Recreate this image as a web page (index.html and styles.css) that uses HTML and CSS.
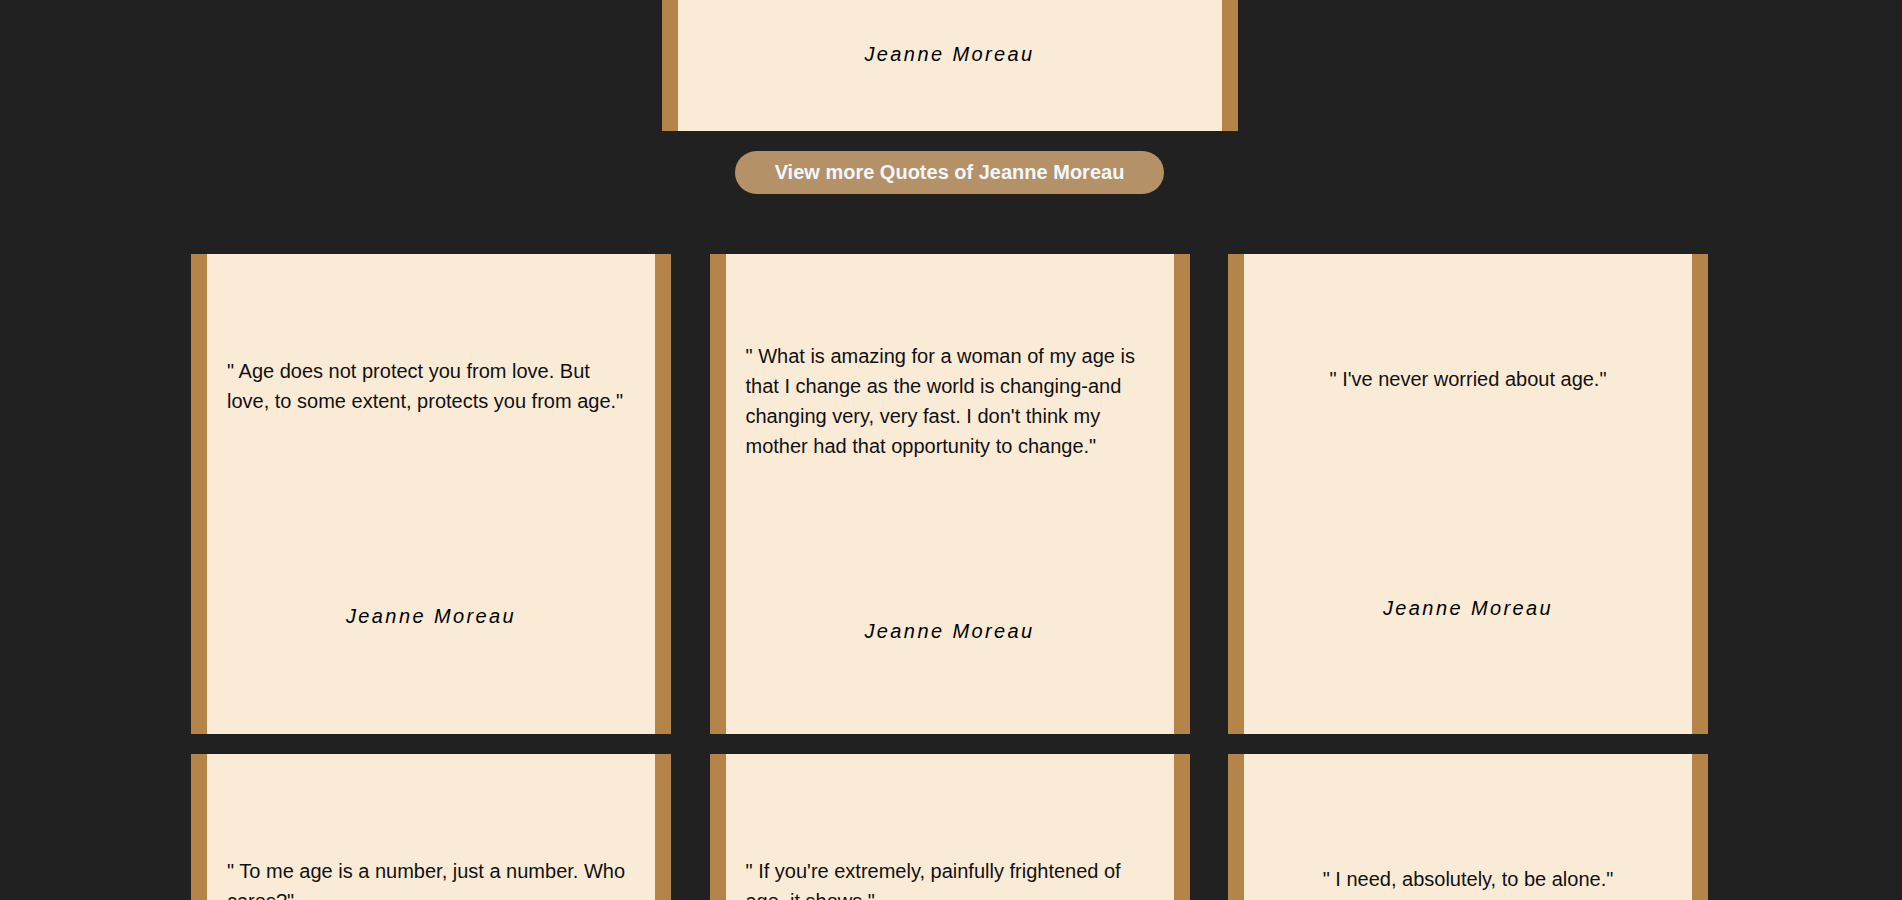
FILE: index.html
```html
<!DOCTYPE html>
<html lang="en">
<head>
<meta charset="utf-8">
<title>Quotes of Jeanne Moreau</title>
<link rel="stylesheet" href="styles.css">
</head>
<body>
<div class="page">
  <section class="featured">
    <div class="featured-card">
      <p class="author">Jeanne Moreau</p>
    </div>
    <a class="more-btn" href="#">View more Quotes of Jeanne Moreau</a>
  </section>

  <section class="quote-grid">
    <article class="quote-card">
      <p class="quote">" Age does not protect you from love. But love, to some extent, protects you from age."</p>
      <p class="author">Jeanne Moreau</p>
    </article>
    <article class="quote-card">
      <p class="quote">" What is amazing for a woman of my age is that I change as the world is changing-and changing very, very fast. I don't think my mother had that opportunity to change."</p>
      <p class="author">Jeanne Moreau</p>
    </article>
    <article class="quote-card">
      <p class="quote">" I've never worried about age."</p>
      <p class="author">Jeanne Moreau</p>
    </article>
    <article class="quote-card">
      <p class="quote">" To me age is a number, just a number. Who cares?"</p>
      <p class="author">Jeanne Moreau</p>
    </article>
    <article class="quote-card">
      <p class="quote">" If you're extremely, painfully frightened of age, it shows."</p>
      <p class="author">Jeanne Moreau</p>
    </article>
    <article class="quote-card">
      <p class="quote">" I need, absolutely, to be alone."</p>
      <p class="author">Jeanne Moreau</p>
    </article>
  </section>
</div>
</body>
</html>
```

FILE: styles.css
```css
html, body {
  margin: 0;
  padding: 0;
  background: #212121;
}

body {
  font-family: "Liberation Sans", Arial, Helvetica, sans-serif;
  color: #111;
}

.page {
  padding: 0 3px 60px 0;
}

.featured {
  display: flex;
  flex-direction: column;
  align-items: center;
}

.featured-card {
  box-sizing: border-box;
  width: 576px;
  height: 131px;
  background: #faebd7;
  border-left: 16px solid #b48448;
  border-right: 16px solid #b48448;
  display: flex;
  flex-direction: column;
  align-items: center;
  padding-top: 39px;
}

.more-btn {
  display: block;
  margin-top: 20px;
  padding: 10px 40px;
  border-radius: 22px;
  background: #b59168;
  color: #f0f8ff;
  font-weight: bold;
  font-size: 20px;
  line-height: 23px;
  text-decoration: none;
}

.quote-grid {
  margin-top: 60px;
  display: grid;
  grid-template-columns: repeat(3, 480px);
  column-gap: 38.5px;
  row-gap: 20px;
  justify-content: center;
}

.quote-card {
  box-sizing: border-box;
  height: 480px;
  background: #faebd7;
  border-left: 16px solid #b48448;
  border-right: 16px solid #b48448;
  padding: 10px 20px;
  display: flex;
  flex-direction: column;
  justify-content: space-around;
  align-items: center;
}

.quote {
  margin: 0;
  font-size: 20px;
  line-height: 30px;
  color: #111;
}

.author {
  margin: 4px 0;
  font-size: 20px;
  line-height: 23px;
  font-style: italic;
  letter-spacing: 2.4px;
  color: #000;
}
```
